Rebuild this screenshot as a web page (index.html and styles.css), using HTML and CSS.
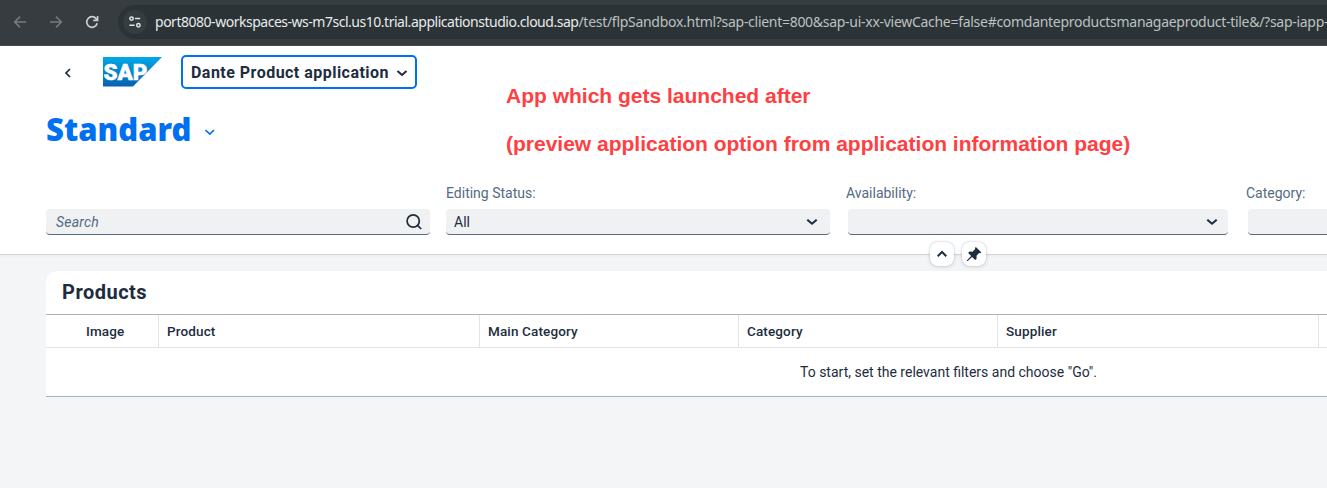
FILE: index.html
```html
<!DOCTYPE html>
<html lang="en">
<head>
<meta charset="utf-8">
<title>Dante Product application</title>
<link rel="stylesheet" href="styles.css">
</head>
<body>
<div class="browser">
  <svg class="nav-icon dim" viewBox="0 0 16 16"><path d="M14 8H3M8 2.6 2.6 8 8 13.4"/></svg>
  <svg class="nav-icon dim" viewBox="0 0 16 16"><path d="M2 8h11M8 2.6 13.4 8 8 13.4"/></svg>
  <svg class="nav-icon" viewBox="0 0 16 16"><path d="M13.2 9.2A5.3 5.3 0 1 1 12.2 4.7L13.6 6.2M13.6 2v4.4H9.2"/></svg>
  <div class="address">
    <span class="site"><svg viewBox="0 0 14 14"><circle cx="3.6" cy="3.6" r="1.7"/><path d="M7 3.6h5.2M1.4 10.2h5.2"/><circle cx="10.4" cy="10.2" r="1.7"/></svg></span>
    <span class="url"><span class="host">port8080-workspaces-ws-m7scl.us10.trial.applicationstudio.cloud.sap</span><span class="path">/test/flpSandbox.html?sap-client=800&amp;sap-ui-xx-viewCache=false#comdanteproductsmanagaeproduct-tile&amp;/?sap-iapp-</span></span>
  </div>
</div>
<header class="header">
  <div class="top">
    <div class="left">
      <div class="shell">
        <svg class="back" viewBox="0 0 8 12"><path d="M6 2 2 6l4 4"/></svg>
        <svg class="logo" viewBox="0 0 59 30">
          <defs><linearGradient id="g" x1="0" y1="0" x2="0" y2="1"><stop offset="0" stop-color="#00a9e8"/><stop offset="1" stop-color="#0a61b0"/></linearGradient></defs>
          <path d="M0 0h59L30 29.5H0z" fill="url(#g)"/>
          <text class="logo-text" x="0.4" y="23" textLength="44" lengthAdjust="spacingAndGlyphs">SAP</text>
        </svg>
        <button class="app-title"><span>Dante Product application</span><svg viewBox="0 0 12 8"><path d="m1.5 2 4.5 4 4.5-4"/></svg></button>
      </div>
      <div class="variant"><h1>Standard</h1><svg viewBox="0 0 12 8"><path d="m1.5 2 4.3 4 4.3-4"/></svg></div>
    </div>
    <div class="note"><p class="note-a">App which gets launched after</p><p class="note-b">(preview application option from application information page)</p></div>
  </div>
  <div class="filters">
    <div class="filter"><label></label><div class="field"><i>Search</i><svg class="mag" viewBox="0 0 18 18"><circle cx="8.2" cy="8" r="6.1"/><path d="m12.5 12.3 3.7 3.7"/></svg></div></div>
    <div class="filter"><label>Editing Status:</label><div class="field"><span class="val">All</span><svg class="arrow" viewBox="0 0 12 8"><path d="m1.3 1.7 4.7 4 4.7-4"/></svg></div></div>
    <div class="filter"><label>Availability:</label><div class="field narrow"><span></span><svg class="arrow" viewBox="0 0 12 8"><path d="m1.3 1.7 4.7 4 4.7-4"/></svg></div></div>
    <div class="filter"><label>Category:</label><div class="field narrow"></div></div>
  </div>
  <div class="toggles">
    <span class="toggle"><svg viewBox="0 0 16 16"><path class="up" d="m3.7 10.2 4.3-4.2 4.3 4.2"/></svg></span>
    <span class="toggle"><svg viewBox="0 0 16 16"><path class="pin" d="M9.9 1 15.2 6.2 14.3 7.2 13.1 7 10.5 9.7 10.6 12.7 9.3 14 6.1 10.9 1.7 15 1 15 1 14.3 5.1 9.9 2.2 6.9 3.4 5.6 6.5 5.8 9.2 3.1 9 1.9Z"/></svg></span>
  </div>
</header>
<main class="panel">
  <h2>Products</h2>
  <div class="row">
    <div class="cell">Image</div>
    <div class="cell">Product</div>
    <div class="cell">Main Category</div>
    <div class="cell">Category</div>
    <div class="cell">Supplier</div>
    <div class="cell last"></div>
  </div>
  <div class="empty">To start, set the relevant filters and choose "Go".</div>
</main>
</body>
</html>
```
FILE: styles.css
```css
* { box-sizing: border-box; }
html { overflow: hidden; }
body { margin: 0; width: 100%; height: 488px; overflow: hidden; background: #f4f5f7; color: #1d2d3e; font-family: Roboto, "Liberation Sans", sans-serif; font-size: 14px; }
h1, h2, p { margin: 0; }
svg { display: block; fill: none; stroke: currentColor; stroke-width: 1.7; flex: none; }
.browser { height: 46px; background: #363c3f; border-bottom: 1px solid #484a4c; display: flex; align-items: center; padding: 0 0 2px 12px; color: #c8cccd; overflow: hidden; }
.nav-icon { width: 16px; height: 16px; margin-right: 20px; }
.nav-icon.dim { color: #777c7e; stroke-width: 1.5; }
.address { flex: 1; min-width: 0; height: 34px; margin-left: -2px; background: #2b3336; border-radius: 17px 0 0 17px; display: flex; align-items: center; padding-left: 5px; overflow: hidden; }
.site { flex: none; width: 24px; height: 24px; border-radius: 12px; background: #363d40; display: flex; align-items: center; justify-content: center; margin-right: 8px; }
.site svg { width: 14px; height: 14px; stroke-width: 1.5; color: #e0e3e4; }
.url { font: 14px/20px "Noto Sans", sans-serif; white-space: nowrap; display: flex; color: #bcc1c2; }
.host { color: #e9ebec; letter-spacing: -0.48px; }
.path { letter-spacing: -0.285px; }
.header { position: relative; height: 209px; background: #fff; border-bottom: 1px solid #d5d7d9; box-shadow: 0 1px 3px #0000000c; }
.top { display: flex; height: 137px; }
.left { width: 506px; flex: none; }
.shell { display: flex; align-items: center; padding: 9px 0 0 64px; }
.back { width: 8px; height: 12px; margin: 2px 31px 0 0; }
.logo { width: 59px; height: 30px; margin-right: 19px; stroke: none; }
.logo-text { font: 900 22.5px Roboto, sans-serif; fill: #fff; stroke: #fff; stroke-width: .5; }
.app-title { width: 236px; height: 34px; border: 2px solid #0070f2; border-radius: 5px; background: #fff; padding: 2px 7px 0 8px; display: flex; align-items: center; justify-content: space-between; color: #1d2d3e; font: 700 16px/20px Roboto, sans-serif; white-space: nowrap; }
.app-title span { letter-spacing: .47px; }
.app-title svg { width: 12px; height: 8px; stroke-width: 2; }
.variant { display: flex; align-items: center; padding: 20px 0 0 46px; color: #0070f2; }
.variant h1 { font: 900 31px/40px "Noto Sans", sans-serif; width: 158px; }
.variant svg { width: 12px; height: 8px; margin-top: 6px; }
.note { padding-top: 38px; color: #ff4043; font: 700 21px/24px "Liberation Sans", Arial, sans-serif; white-space: nowrap; }
.note-b { margin-top: 24px; }
.filters { display: flex; width: 100%; overflow: hidden; }
.filter { width: 400px; flex: none; }
.filter:first-child { padding-left: 46px; width: 446px; }
.filter label { display: block; height: 26px; line-height: 20px; color: #556b82; }
.field { width: 384px; height: 26px; background: #eff1f2; border-radius: 4px; border-bottom: 1px solid #556b82; display: flex; align-items: center; justify-content: space-between; padding: 0 12px 0 8px; }
.field.narrow { width: 380px; margin-left: 2px; padding-right: 10px; }
.field i { color: #556b82; padding-left: 2px; letter-spacing: .2px; }
.field .mag { width: 18px; height: 18px; margin-right: -5px; }
.arrow { width: 12px; height: 8px; stroke-width: 2.1; }
.toggles { position: absolute; left: 930px; top: 196px; display: flex; gap: 8px; }
.toggle { width: 24px; height: 24px; border-radius: 8px; background: #fff; box-shadow: 0 0 2px #556b8255, 0 1px 4px #556b8230; display: grid; place-items: center; }
.toggle svg { width: 16px; height: 16px; stroke-width: 2; }
.pin { fill: #1d2d3e; stroke: none; }
.panel { margin: 16px 0 0 46px; height: 126px; overflow: hidden; background: #fff; border-radius: 12px 0 0 0; border-bottom: 1px solid #a8b2bd; }
.panel h2 { height: 43px; padding-left: 16px; font: 700 20px/42px Roboto, sans-serif; letter-spacing: .5px; }
.row { height: 34px; display: grid; grid-template-columns: 113px 321px 259px 259px 321px 1fr; border-top: 1px solid #a8b2bd; border-bottom: 1px solid #e3e4e6; }
.cell { border-right: 1px solid #e3e4e6; padding-left: 8px; font-weight: 500; line-height: 33px; font-size: 13.5px; letter-spacing: .13px; }
.cell:first-child { padding-left: 40px; }
.cell.last { border-right: 0; }
.empty { padding-left: 754px; line-height: 49px; font-size: 14px; white-space: nowrap; }
```
